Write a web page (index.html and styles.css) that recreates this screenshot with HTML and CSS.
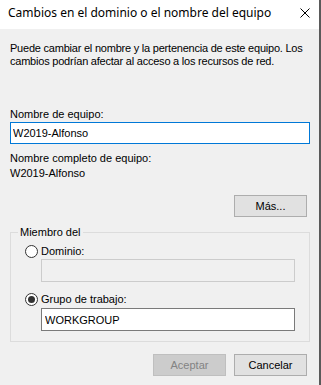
FILE: index.html
```html
<!DOCTYPE html>
<html lang="es">
<head>
<meta charset="utf-8">
<title>Cambios en el dominio o el nombre del equipo</title>
<link rel="stylesheet" href="styles.css">
</head>
<body>
<div class="window">
  <div class="titlebar">
    <span class="title">Cambios en el dominio o el nombre del equipo</span>
    <svg class="close" width="10" height="10" viewBox="0 0 10 10"><path d="M0.5 0.5L9.5 9.5M9.5 0.5L0.5 9.5" stroke="#000" stroke-width="1" fill="none"/></svg>
  </div>
  <div class="content">
    <p class="desc">Puede cambiar el nombre y la pertenencia de este equipo. Los cambios podrían afectar al acceso a los recursos de red.</p>
    <div class="label first">Nombre de equipo:</div>
    <input class="field focus" type="text" value="W2019-Alfonso">
    <div class="label full">Nombre completo de equipo:</div>
    <div class="label value">W2019-Alfonso</div>
    <div class="row more-row"><button class="btn">Más...</button></div>
    <fieldset class="group">
      <legend>Miembro del</legend>
      <div class="group-body">
        <div class="radio-row first-radio"><span class="radio"></span><span>Dominio:</span></div>
        <input class="field sub disabled" type="text" disabled>
        <div class="radio-row second-radio"><span class="radio checked"></span><span>Grupo de trabajo:</span></div>
        <input class="field sub" type="text" value="WORKGROUP">
      </div>
    </fieldset>
    <div class="row actions">
      <button class="btn off" disabled>Aceptar</button>
      <button class="btn">Cancelar</button>
    </div>
  </div>
</div>
</body>
</html>
```

FILE: styles.css
```css
html, body {
  margin: 0;
  padding: 0;
  background: #f0f0f0;
}
.window {
  width: 321px;
  height: 385px;
  box-sizing: border-box;
  background: #f0f0f0;
  border-right: 2px solid #5a5a5a;
  font-family: "Liberation Sans", Arial, sans-serif;
  font-size: 11px;
  line-height: 13px;
  color: #000;
  overflow: hidden;
}
.titlebar {
  height: 29px;
  background: #fff;
  display: flex;
  align-items: center;
  justify-content: space-between;
  padding: 0 9px 0 8px;
}
.title {
  font-family: "Noto Sans", "Open Sans", sans-serif;
  font-size: 12px;
  line-height: 16px;
  color: #000;
  margin-top: -3px;
}
.close {
  display: block;
  margin-top: -4px;
}
.content {
  padding: 0 11px 0 10px;
}
.desc {
  margin: 0 -6px 0 0;
  padding-top: 13px;
  letter-spacing: -0.22px;
}
.label.first { margin-top: 40px; }
.label.full { margin-top: 8px; }
.label.value { margin-top: 2px; }
.field {
  display: block;
  box-sizing: border-box;
  width: 300px;
  height: 22px;
  margin: 1px 0 0;
  padding: 0 2px;
  border: 1px solid #7a7a7a;
  background: #fff;
  font-family: "Liberation Sans", Arial, sans-serif;
  font-size: 11px;
  color: #000;
  outline: none;
}
.field.focus { border-color: #0078d7; }
.field.sub {
  width: 254px;
  height: 23px;
  margin-left: 16px;
  padding: 0 3px;
}
.field.disabled {
  background: #f0f0f0;
  border-color: #cccccc;
}
.row {
  display: flex;
  justify-content: flex-end;
  gap: 8px;
  padding-right: 1px;
}
.more-row { margin-top: 15px; }
.btn {
  box-sizing: border-box;
  width: 73px;
  height: 22px;
  margin: 0;
  padding: 0;
  border: 1px solid #adadad;
  background: #e1e1e1;
  font-family: "Liberation Sans", Arial, sans-serif;
  font-size: 11px;
  color: #000;
}
.btn.off {
  background: #cccccc;
  border-color: #bfbfbf;
  color: #838383;
}
.group {
  margin: 9px 0 0;
  padding: 0;
  width: 300px;
  box-sizing: border-box;
  border: 1px solid #dcdcdc;
}
.group legend {
  margin-left: 7px;
  padding: 0 2px;
  line-height: 13px;
}
.group-body {
  padding: 0 0 10px 14px;
}
.radio-row {
  display: flex;
  align-items: center;
  gap: 3px;
  height: 13px;
}
.first-radio { margin-top: 6px; }
.second-radio { margin-top: 11px; }
.second-radio + .field { margin-top: 2px; }
.radio {
  width: 13px;
  height: 13px;
  box-sizing: border-box;
  border: 1px solid #333;
  border-radius: 50%;
  background: #fff;
  display: flex;
  align-items: center;
  justify-content: center;
}
.radio.checked::after {
  content: "";
  width: 7px;
  height: 7px;
  border-radius: 50%;
  background: #333;
}
.actions { margin-top: 12px; }
```
